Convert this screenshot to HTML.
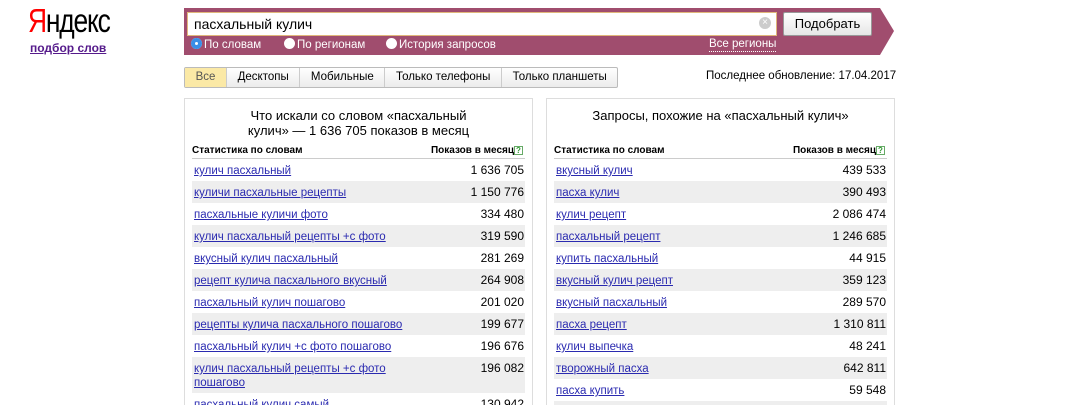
<!DOCTYPE html>
<html><head><meta charset="utf-8"><style>
*{margin:0;padding:0;box-sizing:border-box}
html,body{width:1080px;height:405px;overflow:hidden}
body{background:#fff;font-family:"Liberation Sans",Arial,sans-serif;font-size:11.5px;color:#000;position:relative}
.a{position:absolute}
.logo{left:28px;top:2px;font-size:33px;letter-spacing:-1.5px;transform:scaleX(0.8);transform-origin:left top;color:#000}
.logo span{color:#f00}
.sub{left:30px;top:41px;font-size:12px;font-weight:bold;color:#551a8b;text-decoration:underline}
.bar{left:184px;top:8px;width:710px;height:47px;background:#a04d6e;clip-path:polygon(0 0,696px 0,710px 23px,696px 47px,0 47px)}
.inp{left:187px;top:12px;width:590px;height:24px;background:#fff;border:1px solid #e0b77a;font-size:14px;padding:3px 6px}
.clr{left:759px;top:17px;width:12px;height:12px;border-radius:50%;background:#ccc;color:#fff;font-size:10px;line-height:12px;text-align:center}
.btn{left:783px;top:12px;width:89px;height:24px;background:linear-gradient(#fff,#e6e6e6);border:1px solid #999;border-radius:2px;font-size:13px;text-align:center;line-height:22px}
.r{top:38px;color:#fff;font-size:11.5px}
.dot{display:inline-block;width:11px;height:11px;border-radius:50%;background:#fff;vertical-align:-1px;margin-right:2px}
.reg{left:709px;top:38px;color:#fff;border-bottom:1px dotted #fff;line-height:13px}
.tabs{left:184px;top:67px;height:21px;display:flex;border:1px solid #bbb;border-radius:2px;background:linear-gradient(#fff,#ececec)}
.tabs div{padding:0 10.6px;line-height:19px;border-left:1px solid #ccc}
.tabs div:first-child{border:none;background:#fbe9a6;color:#555}
.upd{left:706px;top:70px}
.pan{top:98px;width:349px;height:320px;border:1px solid #ddd}
.title{font-size:13px;text-align:center;line-height:15px;width:100%}
.hd{font-size:10px;font-weight:bold;top:145px;width:333px;border-bottom:1px solid #ccc;height:14px}
.hd b{position:absolute;right:2px}
.q{display:inline-block;width:9px;height:9px;border:1px solid #6a6;color:#393;font-size:8px;line-height:7px;text-align:center;vertical-align:0}
.row{width:333px;height:22px}
.row.g{background:#eee}
.row a{position:absolute;left:2px;top:5px;color:#2a2ab0;text-decoration:underline;line-height:14px}
.row i{position:absolute;right:1px;top:5px;font-style:normal;line-height:13px;font-size:12px}
</style></head><body>
<div class="a logo"><span>Я</span>ндекс</div>
<div class="a sub">подбор слов</div>
<div class="a bar"></div>
<div class="a inp">пасхальный кулич</div>
<div class="a clr">×</div>
<div class="a btn">Подобрать</div>
<div class="a r" style="left:191px"><span class="dot" style="background:#3a8ee6;box-shadow:inset 0 0 0 4px #3a8ee6,inset 0 0 0 6px #fff"></span>По словам</div>
<div class="a r" style="left:284px"><span class="dot"></span>По регионам</div>
<div class="a r" style="left:386px"><span class="dot"></span>История запросов</div>
<div class="a reg">Все регионы</div>
<div class="a tabs"><div>Все</div><div>Десктопы</div><div>Мобильные</div><div>Только телефоны</div><div>Только планшеты</div></div>
<div class="a upd">Последнее обновление: 17.04.2017</div>

<div class="a pan" style="left:184px"></div>
<div class="a title" style="left:184px;width:349px;top:108px">Что искали со словом «пасхальный<br>кулич» — 1 636 705 показов в месяц</div>
<div class="a hd" style="left:192px">Статистика по словам<b>Показов в месяц<span class="q">?</span></b></div>
<div class="a pan" style="left:546px"></div>
<div class="a title" style="left:546px;width:349px;top:108px">Запросы, похожие на «пасхальный кулич»</div>
<div class="a hd" style="left:554px">Статистика по словам<b>Показов в месяц<span class="q">?</span></b></div>

<div class="a" style="left:192px;top:159px">
<div class="row a" style="top:0"><a>кулич пасхальный</a><i>1 636 705</i></div>
<div class="row a g" style="top:22px"><a>куличи пасхальные рецепты</a><i>1 150 776</i></div>
<div class="row a" style="top:44px"><a>пасхальные куличи фото</a><i>334 480</i></div>
<div class="row a g" style="top:66px"><a>кулич пасхальный рецепты +с фото</a><i>319 590</i></div>
<div class="row a" style="top:88px"><a>вкусный кулич пасхальный</a><i>281 269</i></div>
<div class="row a g" style="top:110px"><a>рецепт кулича пасхального вкусный</a><i>264 908</i></div>
<div class="row a" style="top:132px"><a>пасхальный кулич пошагово</a><i>201 020</i></div>
<div class="row a g" style="top:154px"><a>рецепты кулича пасхального пошагово</a><i>199 677</i></div>
<div class="row a" style="top:176px"><a>пасхальный кулич +с фото пошагово</a><i>196 676</i></div>
<div class="row a g" style="top:198px;height:36px"><a style="width:200px">кулич пасхальный рецепты +с фото пошагово</a><i>196 082</i></div>
<div class="row a" style="top:234px"><a>пасхальный кулич самый</a><i>130 942</i></div>
</div>
<div class="a" style="left:554px;top:159px">
<div class="row a" style="top:0"><a>вкусный кулич</a><i>439 533</i></div>
<div class="row a g" style="top:22px"><a>пасха кулич</a><i>390 493</i></div>
<div class="row a" style="top:44px"><a>кулич рецепт</a><i>2 086 474</i></div>
<div class="row a g" style="top:66px"><a>пасхальный рецепт</a><i>1 246 685</i></div>
<div class="row a" style="top:88px"><a>купить пасхальный</a><i>44 915</i></div>
<div class="row a g" style="top:110px"><a>вкусный кулич рецепт</a><i>359 123</i></div>
<div class="row a" style="top:132px"><a>вкусный пасхальный</a><i>289 570</i></div>
<div class="row a g" style="top:154px"><a>пасха рецепт</a><i>1 310 811</i></div>
<div class="row a" style="top:176px"><a>кулич выпечка</a><i>48 241</i></div>
<div class="row a g" style="top:198px"><a>творожный пасха</a><i>642 811</i></div>
<div class="row a" style="top:220px"><a>пасха купить</a><i>59 548</i></div>
<div class="row a g" style="top:242px"></div>
</div>
</body></html>
